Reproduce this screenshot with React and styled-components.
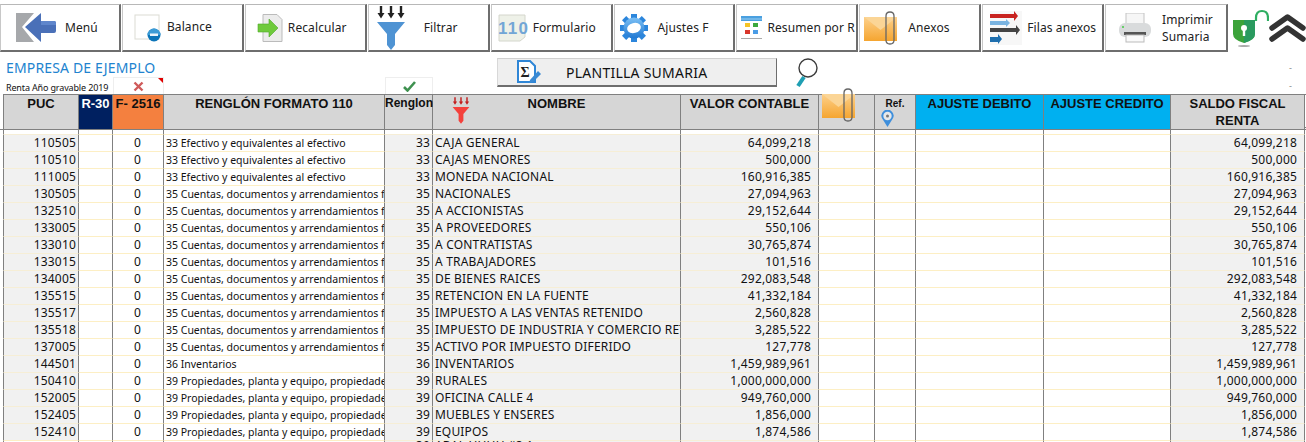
import React from "react";
import styled, { createGlobalStyle } from "styled-components";

const GlobalStyle = createGlobalStyle`
  html, body { margin: 0; padding: 0; background: #fff; overflow: hidden; }
  body { width: 1306px; height: 442px; font-family: "Noto Sans", "Liberation Sans", sans-serif; color: #111; }
`;

const COLS = "76px 34px 51px 221px 48px 248px 138px 56px 41px 128px 127px 134px";

const MenuIcon = () => (
  <svg width="42" height="32" viewBox="0 0 42 32">
    <path d="M1 1h18L7 15l12 15H1z" fill="#a6a8ab" />
    <path d="M10 15L26 1v8h13q2 0 2 2v8q0 2-2 2H26v9z" fill="#4a70b8" />
    <path d="M26 9h13q2 0 2 2v2H26z" fill="#5f86cc" />
  </svg>
);
const BalanceIcon = () => (
  <svg width="28" height="28" viewBox="0 0 28 28">
    <rect x="1" y="1" width="24" height="24" fill="#fff" stroke="#dcdcd4" />
    <circle cx="20" cy="21" r="6.500" fill="#0b74b8" />
    <path d="M13.500 21a6.500 6.500 0 0 1 13 0z" fill="#3b9bd6" />
    <rect x="16" y="19.500" width="8" height="2.500" fill="#e8f4fb" />
  </svg>
);
const RecalcIcon = () => (
  <svg width="26" height="28" viewBox="0 0 26 28">
    <path d="M6 .5h14l5 5v22H6z" fill="#ececec" stroke="#bbb" />
    <path d="M1 10h11V5l9 9-9 9v-5H1z" fill="#6fca3c" stroke="#4fa82a" strokeWidth=".6" />
  </svg>
);
const FunnelIcon = ({ color = "#4f93d3", dark = "#222", w = 30, h = 44 }) => (
  <svg width={w} height={h} viewBox="0 0 30 44">
    {[5, 15, 25].map((x) => (
      <path key={x} d={`M${x - 1.2} 0h2.400v7h2.300L${x} 12.500 ${x - 3.500} 7h2.300z`} fill={dark} />
    ))}
    <path d="M1 16h28L19 28v11l-4 5-4-5V28z" fill={color} />
  </svg>
);
const FormIcon = () => (
  <svg width="30" height="28" viewBox="0 0 30 28">
    <path d="M1 1h26v22l-5 4H1z" fill="#eef1e8" stroke="#d4d6cc" />
    <text x="0" y="20" fontSize="17" fontWeight="bold" fontFamily="Liberation Sans, sans-serif" fill="#72a6d6" textLength="30">110</text>
  </svg>
);
const GearIcon = () => (
  <svg width="30" height="28" viewBox="0 0 30 28">
    <defs>
      <linearGradient id="gearFill" x1="0" y1="0" x2="0" y2="1">
        <stop offset="0" stopColor="#7cc0f5" />
        <stop offset="1" stopColor="#1f78d2" />
      </linearGradient>
    </defs>
    <g fill="#2c86dc">
      {[0, 45, 90, 135, 180, 225, 270, 315].map((a) => (
        <rect key={a} x="12" y="0" width="6" height="6" transform={`rotate(${a} 15 14)`} />
      ))}
    </g>
    <circle cx="15" cy="14" r="10.500" fill="url(#gearFill)" />
    <ellipse cx="15" cy="14" rx="7" ry="5" fill="#fff" transform="rotate(-15 15 14)" />
  </svg>
);
const SummaryIcon = () => (
  <svg width="22" height="24" viewBox="0 0 22 24">
    <rect width="21" height="5" fill="#4aa0e0" />
    <rect x="0" y="2.500" width="21" height="1" fill="#9acdf0" />
    <rect x="4" y="7" width="5" height="4" fill="#f5c426" />
    <rect x="12" y="7" width="5" height="4" fill="#3da83c" />
    <rect x="4" y="14" width="5" height="4" fill="#d9362b" />
    <rect x="12" y="14" width="5" height="4" fill="#4a9ce6" />
    <rect y="22" width="21" height="1" fill="#aaa" />
  </svg>
);
const MailClipIcon = () => (
  <svg width="34" height="34" viewBox="0 0 34 34">
    <defs>
      <linearGradient id="mailFill" x1="0" y1="0" x2="0" y2="1">
        <stop offset="0" stopColor="#fdd08a" />
        <stop offset="1" stopColor="#f5a530" />
      </linearGradient>
    </defs>
    <rect y="6" width="33" height="24" fill="url(#mailFill)" />
    <path d="M0 6l16.500 13L33 6z" fill="#fbd596" />
    <path d="M22 9v20q0 4 4 4t4-4V5q0-4-4-4t-4 4v22" fill="none" stroke="#666" strokeWidth="1.300" />
  </svg>
);
const RowsIcon = () => (
  <svg width="32" height="34" viewBox="0 0 32 34">
    <rect width="32" height="34" fill="#f7f7f7" />
    <path d="M0 3h24V0l4 5-4 5V7H0z" fill="#c8231f" />
    <path d="M0 10h16V8l4 4-4 4v-2H0z" fill="#79b3e0" />
    <path d="M0 17h26v-3l4 5-4 5v-3H0z" fill="#444" />
    <path d="M0 26h8v-3l4 5-4 5v-2H0z" fill="#1f6fae" />
  </svg>
);
const PrinterIcon = () => (
  <svg width="34" height="30" viewBox="0 0 34 30">
    <rect x="8" y="0" width="18" height="11" fill="#f6f6f6" stroke="#c4c4c4" />
    <rect x="1" y="10" width="32" height="14" rx="6" fill="#d9dbdc" />
    <rect x="6" y="19" width="22" height="3" fill="#555" />
    <rect x="8" y="22" width="18" height="7" fill="#fafafa" stroke="#bbb" />
    <circle cx="5" cy="14" r="1" fill="#4c4" />
  </svg>
);
const LockIcon = () => (
  <svg width="36" height="38" viewBox="0 0 36 38">
    <path d="M23 12V9q0-7 6-7t6 7v3" fill="none" stroke="#2fae62" strokeWidth="2.200" />
    <path d="M0 11h22v14q0 6-11 9Q0 31 0 25z" fill="#3ca33a" />
    <path d="M11 11h11v14q0 6-11 9z" fill="#2a9a5f" />
    <circle cx="11" cy="19" r="3" fill="#fff" />
    <rect x="9.800" y="20" width="2.400" height="7" fill="#fff" />
    <ellipse cx="11" cy="37" rx="6" ry="1" fill="#aaa" />
  </svg>
);
const ChevronsIcon = () => (
  <svg width="37" height="28" viewBox="0 0 37 28">
    <path d="M3 14L18.500 3 34 14M3 25l15.500-11L34 25" fill="none" stroke="#333" strokeWidth="5.500" strokeLinecap="round" strokeLinejoin="round" />
  </svg>
);
const SigmaIcon = () => (
  <svg width="26" height="26" viewBox="0 0 26 26">
    <path d="M2 2h12l5 5v16H2z" fill="#fff" stroke="#2f86d6" strokeWidth="2" />
    <text x="4.500" y="18" fontSize="14" fontWeight="bold" fontFamily="Liberation Serif, serif" fill="#222">Σ</text>
    <path d="M14 21l8-9 3 3-8 8-4 1z" fill="#3a8ad4" />
  </svg>
);
const LensIcon = () => (
  <svg width="24" height="30" viewBox="0 0 24 30">
    <circle cx="13" cy="10" r="9" fill="#fff" stroke="#3c3c3c" strokeWidth="1.400" />
    <path d="M9 19L3 28" stroke="#1f9fb3" strokeWidth="4" />
  </svg>
);
const CrossIcon = () => (
  <svg width="11" height="11" viewBox="0 0 11 11">
    <path d="M1.500 1.500l8 8M9.500 1.500l-8 8" stroke="#cf5a5a" strokeWidth="2.400" />
  </svg>
);
const CheckIcon = () => (
  <svg width="13" height="11" viewBox="0 0 13 11">
    <path d="M1 6l3.500 3.500L12 1" fill="none" stroke="#3f9150" strokeWidth="2.600" />
  </svg>
);
const PinIcon = () => (
  <svg width="13" height="17" viewBox="0 0 13 17">
    <path d="M6.500 17L1.500 9a6 6 0 1 1 10 0z" fill="#3f8fdc" />
    <circle cx="6.500" cy="6" r="4.200" fill="#e6e8ea" />
    <circle cx="6.500" cy="6" r="1.500" fill="#777" />
  </svg>
);

const Toolbar = styled.div`
  display: flex;
  gap: 1px;
  height: 48px;
  padding-top: 4px;
`;
const ToolButton = styled.div`
  width: ${(p) => p.$w}px;
  display: flex;
  align-items: center;
  gap: ${(p) => p.$gap ?? 10}px;
  padding-left: ${(p) => p.$pad ?? 10}px;
  box-sizing: border-box;
  background: #fff;
  border-top: 1px solid #b8b8b8;
  border-left: 1px solid #c8c8c8;
  border-right: 2px solid #6e6e6e;
  border-bottom: 2px solid #6e6e6e;
  font-size: 12px;
  line-height: 17px;
  letter-spacing: 0.1px;
  overflow: hidden;
  white-space: nowrap;
  color: #222;
`;
const ToolLabel = styled.span`
  padding-bottom: ${(p) => (p.$lift ? 3 : 0)}px;
`;
const StatusIcons = styled.div`
  display: flex;
  align-items: center;
  margin-left: 4px;
`;

const Band = styled.div`
  display: grid;
  grid-template-columns: ${COLS};
  grid-template-rows: 25px 17px;
  padding-left: 3px;
  height: 42px;
`;
const Company = styled.div`
  grid-column: 1 / 5;
  grid-row: 1;
  margin: 0 0 -1px 3px;
  align-self: end;
  font-size: 14px;
  line-height: 20px;
  letter-spacing: 0.15px;
  color: #2183cf;
  white-space: nowrap;
`;
const Subtitle = styled.div`
  grid-column: 1 / 3;
  grid-row: 2;
  margin: 3px 0 0 3px;
  font-size: 9px;
  line-height: 16px;
  letter-spacing: -0.15px;
  color: #111;
  white-space: nowrap;
`;
const MarkBox = styled.div`
  grid-column: ${(p) => p.$col};
  grid-row: 2;
  position: relative;
  display: flex;
  align-items: center;
  justify-content: center;
  border: 1px solid #eee;
  border-bottom: 0;
`;
const RedCorner = styled.span`
  position: absolute;
  top: 0;
  right: 0;
  border-top: 5px solid #e00000;
  border-left: 5px solid transparent;
`;
const PlantillaArea = styled.div`
  grid-column: 6 / 9;
  grid-row: 1 / 3;
  display: flex;
  align-items: flex-start;
  gap: 18px;
  padding: 6px 0 0 64px;
`;
const PlantillaButton = styled.div`
  width: 280px;
  height: 29px;
  box-sizing: border-box;
  display: flex;
  align-items: center;
  gap: 24px;
  padding-left: 18px;
  background: #efefef;
  border-top: 1px solid #d0d0d0;
  border-left: 1px solid #d8d8d8;
  border-right: 1px solid #6e6e6e;
  border-bottom: 2px solid #6e6e6e;
  font-size: 14px;
  letter-spacing: 0.25px;
  color: #111;
`;
const Tick = styled.div`
  grid-column: 12;
  grid-row: ${(p) => p.$row};
  justify-self: end;
  margin-right: 13px;
  font-size: 9px;
  line-height: ${(p) => p.$lh}px;
  color: #888;
`;

const Sheet = styled.div`
  padding-left: 3px;
`;
const HeadRow = styled.div`
  display: grid;
  grid-template-columns: ${COLS};
  height: 34px;
  box-sizing: border-box;
  border-top: 1px solid #808080;
  border-bottom: 1px solid #808080;
`;
const HeadCell = styled.div`
  position: relative;
  box-sizing: border-box;
  background: ${(p) => p.$bg || "#d6d6d6"};
  color: ${(p) => p.$fg || "#111"};
  border-right: 1px solid #808080;
  border-left: ${(p) => (p.$first ? "1px solid #808080" : "0")};
  text-align: center;
  font-family: "Liberation Sans", sans-serif;
  font-weight: bold;
  font-size: ${(p) => p.$size || 13}px;
  line-height: 17px;
  white-space: nowrap;
`;
const HeadFunnel = styled.span`
  position: absolute;
  left: 19px;
  top: 2px;
  display: flex;
`;
const HeadClip = styled.span`
  position: absolute;
  left: 3px;
  top: -7px;
  display: flex;
`;
const RefPin = styled.span`
  display: block;
  margin: -2px 0 0 6px;
  text-align: left;
  height: 16px;
`;
const Body = styled.div`
  display: flex;
  flex-direction: column;
`;
const SpacerRow = styled.div`
  display: grid;
  grid-template-columns: ${COLS};
  height: 6px;
  margin-left: -3px;
  padding-left: 3px;
  background: linear-gradient(#808080, #808080) 0 1px / 100% 1px no-repeat;
`;
const Row = styled.div`
  display: grid;
  grid-template-columns: ${COLS};
  height: 17px;
`;
const Cell = styled.div`
  box-sizing: border-box;
  background: ${(p) => (p.$grey ? "#f1f1f1" : "transparent")};
  border-top: ${(p) => (p.$plain ? "0" : `1px solid ${p.$grey ? "#f6eed6" : "#fdefc4"}`)};
  border-right: 1px solid #808080;
  border-left: ${(p) => (p.$first ? "1px solid #808080" : "0")};
  text-align: ${(p) => p.$align || "left"};
  padding-left: ${(p) => (p.$align === "right" ? 0 : 2)}px;
  padding-right: ${(p) => p.$pr ?? 0}px;
  font-size: ${(p) => p.$size || 12}px;
  line-height: ${(p) => (p.$peek ? 10 : 16)}px;
  letter-spacing: ${(p) => (p.$size ? 0 : 0.18)}px;
  white-space: nowrap;
  overflow: hidden;
  color: #111;
`;

const CUENTAS = "35 Cuentas, documentos y arrendamientos financieros";
const PROPIEDADES = "39 Propiedades, planta y equipo, propiedades de inversión";
const EFECTIVO = "33 Efectivo y equivalentes al efectivo";

const rows = [
  ["110505", EFECTIVO, "33", "CAJA GENERAL", "64,099,218"],
  ["110510", EFECTIVO, "33", "CAJAS MENORES", "500,000"],
  ["111005", EFECTIVO, "33", "MONEDA NACIONAL", "160,916,385"],
  ["130505", CUENTAS, "35", "NACIONALES", "27,094,963"],
  ["132510", CUENTAS, "35", "A ACCIONISTAS", "29,152,644"],
  ["133005", CUENTAS, "35", "A PROVEEDORES", "550,106"],
  ["133010", CUENTAS, "35", "A CONTRATISTAS", "30,765,874"],
  ["133015", CUENTAS, "35", "A TRABAJADORES", "101,516"],
  ["134005", CUENTAS, "35", "DE BIENES RAICES", "292,083,548"],
  ["135515", CUENTAS, "35", "RETENCION EN LA FUENTE", "41,332,184"],
  ["135517", CUENTAS, "35", "IMPUESTO A LAS VENTAS RETENIDO", "2,560,828"],
  ["135518", CUENTAS, "35", "IMPUESTO DE INDUSTRIA Y COMERCIO RETENIDO", "3,285,522"],
  ["137005", CUENTAS, "35", "ACTIVO POR IMPUESTO DIFERIDO", "127,778"],
  ["144501", "36 Inventarios", "36", "INVENTARIOS", "1,459,989,961"],
  ["150410", PROPIEDADES, "39", "RURALES", "1,000,000,000"],
  ["152005", PROPIEDADES, "39", "OFICINA CALLE 4", "949,760,000"],
  ["152405", PROPIEDADES, "39", "MUEBLES Y ENSERES", "1,856,000"],
  ["152410", PROPIEDADES, "39", "EQUIPOS", "1,874,586"],
];

const tools = [
  { w: 121, label: "Menú", icon: <MenuIcon />, pad: 14, gap: 8 },
  { w: 122, label: "Balance", icon: <BalanceIcon />, pad: 11, gap: 5, lift: true },
  { w: 122, label: "Recalcular", icon: <RecalcIcon />, pad: 11, gap: 5 },
  { w: 122, label: "Filtrar", icon: <FunnelIcon />, pad: 7, gap: 18 },
  { w: 122, label: "Formulario", icon: <FormIcon />, pad: 6, gap: 5 },
  { w: 122, label: "Ajustes F", icon: <GearIcon />, pad: 4, gap: 9 },
  { w: 122, label: "Resumen por R", icon: <SummaryIcon />, pad: 4, gap: 4 },
  { w: 122, label: "Anexos", icon: <MailClipIcon />, pad: 4, gap: 10 },
  { w: 122, label: "Filas anexos", icon: <RowsIcon />, pad: 7, gap: 5 },
  { w: 123, label: <>Imprimir<br />Sumaria</>, icon: <PrinterIcon />, pad: 12, gap: 10 },
];

export default function App() {
  return (
    <>
      <GlobalStyle />
      <Toolbar>
        {tools.map((t, i) => (
          <ToolButton key={i} $w={t.w} $pad={t.pad} $gap={t.gap}>
            {t.icon}
            <ToolLabel $lift={t.lift}>{t.label}</ToolLabel>
          </ToolButton>
        ))}
        <StatusIcons>
          <LockIcon />
          <ChevronsIcon />
        </StatusIcons>
      </Toolbar>
      <Band>
        <Company>EMPRESA DE EJEMPLO</Company>
        <Subtitle>Renta Año gravable 2019</Subtitle>
        <MarkBox $col={3}><CrossIcon /><RedCorner /></MarkBox>
        <MarkBox $col={5}><CheckIcon /></MarkBox>
        <PlantillaArea>
          <PlantillaButton><SigmaIcon />PLANTILLA SUMARIA</PlantillaButton>
          <LensIcon />
        </PlantillaArea>
        <Tick $row={1} $lh={32}>-</Tick>
        <Tick $row={2} $lh={18}>-</Tick>
      </Band>
      <Sheet>
        <HeadRow>
          <HeadCell $first>PUC</HeadCell>
          <HeadCell $bg="#002060" $fg="#fff">R-30</HeadCell>
          <HeadCell $bg="#f4803f">F- 2516</HeadCell>
          <HeadCell>RENGLÓN FORMATO 110</HeadCell>
          <HeadCell $size={12}>Renglon</HeadCell>
          <HeadCell>
            <HeadFunnel><FunnelIcon color="#f4413c" dark="#c21d1d" w={18} h={27} /></HeadFunnel>
            NOMBRE
          </HeadCell>
          <HeadCell>VALOR CONTABLE</HeadCell>
          <HeadCell><HeadClip><MailClipIcon /></HeadClip></HeadCell>
          <HeadCell $size={10}>Ref.<RefPin><PinIcon /></RefPin></HeadCell>
          <HeadCell $bg="#00b0f0">AJUSTE DEBITO</HeadCell>
          <HeadCell $bg="#00b0f0">AJUSTE CREDITO</HeadCell>
          <HeadCell>SALDO FISCAL<br />RENTA</HeadCell>
        </HeadRow>
        <Body>
          <SpacerRow>
            {Array.from({ length: 12 }, (_, i) => <Cell key={i} $plain $first={i === 0} />)}
          </SpacerRow>
          {rows.map((r) => (
            <Row key={r[0]}>
              <Cell $first $grey $align="right" $pr={2}>{r[0]}</Cell>
              <Cell />
              <Cell $align="center" $pr={3}>0</Cell>
              <Cell $size={10.5}>{r[1]}</Cell>
              <Cell $grey $align="right" $pr={2}>{r[2]}</Cell>
              <Cell $grey>{r[3]}</Cell>
              <Cell $grey $align="right" $pr={7}>{r[4]}</Cell>
              <Cell />
              <Cell />
              <Cell />
              <Cell />
              <Cell $grey $align="right" $pr={7}>{r[4]}</Cell>
            </Row>
          ))}
          <Row>
            <Cell $first />
            <Cell />
            <Cell />
            <Cell />
            <Cell $grey $peek $align="right" $pr={2}>39</Cell>
            <Cell $grey $peek>ABAL HHHH #3 1</Cell>
            <Cell $grey />
            <Cell />
            <Cell />
            <Cell />
            <Cell />
            <Cell $grey />
          </Row>
        </Body>
      </Sheet>
    </>
  );
}
